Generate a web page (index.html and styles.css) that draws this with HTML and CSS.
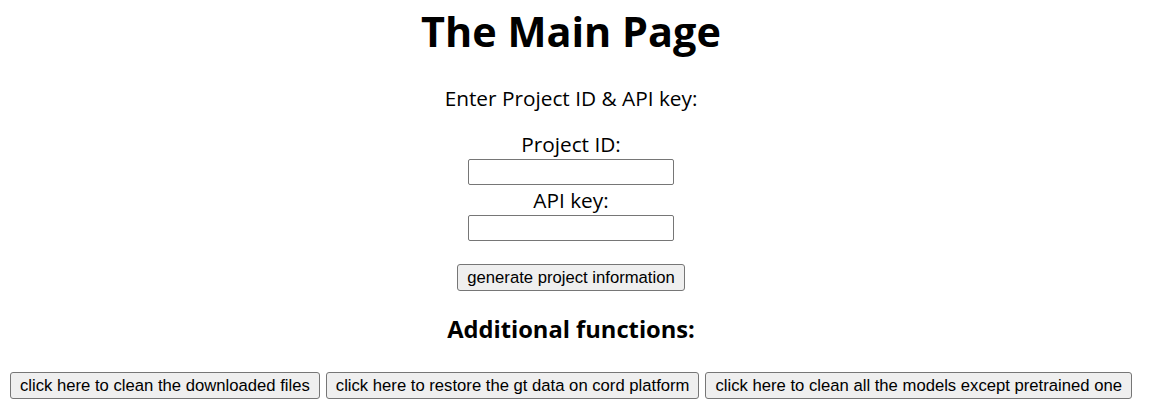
FILE: index.html
```html
<!DOCTYPE html>
<html lang="en">
<head>
<meta charset="utf-8">
<title>The Main Page</title>
<link rel="stylesheet" href="styles.css">
</head>
<body>
<div class="page">
  <h1 class="title">The Main Page</h1>
  <p class="intro">Enter Project ID &amp; API key:</p>
  <form class="creds">
    <label class="field-label" for="pid">Project ID:</label>
    <input class="field" type="text" id="pid">
    <label class="field-label" for="key">API key:</label>
    <input class="field" type="text" id="key">
    <button type="button" class="btn btn-generate">generate project information</button>
  </form>
  <h3 class="subtitle">Additional functions:</h3>
  <div class="actions">
    <button type="button" class="btn">click here to clean the downloaded files</button>
    <button type="button" class="btn">click here to restore the gt data on cord platform</button>
    <button type="button" class="btn">click here to clean all the models except pretrained one</button>
  </div>
</div>
</body>
</html>
```
FILE: styles.css
```css
html, body {
  margin: 0;
  padding: 0;
  background: #ffffff;
}

.page {
  width: 1122px;
  margin: 0 10px;
  font-family: "Open Sans", "Noto Sans", sans-serif;
  color: #000;
  display: flex;
  flex-direction: column;
  align-items: center;
}

.title {
  margin: 6px 0 0;
  font-size: 41.4px;
  line-height: 50px;
  font-weight: 700;
}

.intro {
  margin: 30px 0 0;
  font-size: 20.8px;
  line-height: 24px;
}

.creds {
  margin: 19px 0 0;
  display: flex;
  flex-direction: column;
  align-items: center;
}

.field-label {
  font-size: 20.8px;
  line-height: 30px;
}

.field {
  box-sizing: border-box;
  width: 206px;
  height: 26px;
  margin: 0;
  border: 1px solid #767676;
  border-radius: 2px;
  background: #fff;
  padding: 1px 3px;
}

.btn {
  box-sizing: border-box;
  height: 27px;
  margin: 0;
  padding: 0 9px;
  border: 1px solid #767676;
  border-radius: 3px;
  background: #efefef;
  color: #000;
  font-family: "Liberation Sans", Arial, sans-serif;
  font-size: 16.67px;
  line-height: 25px;
  white-space: nowrap;
}

.btn-generate {
  margin-top: 23px;
}

.subtitle {
  margin: 24px 0 0;
  font-size: 23.7px;
  line-height: 28px;
  font-weight: 700;
}

.actions {
  align-self: stretch;
  margin-top: 29px;
  display: flex;
  gap: 6px;
}
```
